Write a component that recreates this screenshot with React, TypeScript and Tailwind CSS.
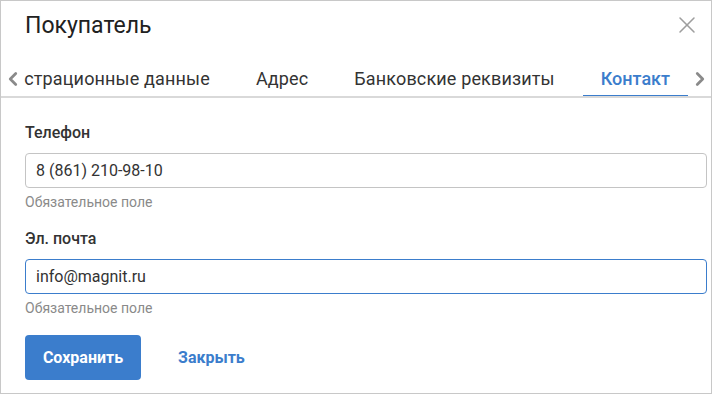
import { ChevronLeft, ChevronRight, X } from 'lucide-react'

const tabs = ['Регистрационные данные', 'Адрес', 'Банковские реквизиты', 'Контакт']

function Field({ label, value, focused }: { label: string; value: string; focused?: boolean }) {
  return (
    <div className="flex flex-col">
      <label className="text-[16px] font-medium leading-[18px] text-[#333]">{label}</label>
      <div
        className={
          focused
            ? 'mt-[11px] flex h-[35px] items-center rounded-[4px] border border-[#3b7dcc] px-[10px]'
            : 'mt-[11px] flex h-[35px] items-center rounded-[4px] border border-[#c4c4c4] px-[10px]'
        }
      >
        <span className="text-[16px] text-[#333]">{value}</span>
      </div>
      <span className="mt-[6px] text-[14px] leading-[16px] text-[#8a8a8a]">Обязательное поле</span>
    </div>
  )
}

export default function App() {
  return (
    <div className="h-[394px] w-[712px] bg-white font-['Roboto',sans-serif]">
      <div className="flex h-full flex-col border border-[#c8c8c8]">
        <div className="flex h-[47px] items-center justify-between pl-[24px] pr-[10px] pt-[4px]">
          <h1 className="text-[23px] font-normal text-[#212121]">Покупатель</h1>
          <X className="-mt-[4px] size-[28px] text-[#9e9e9e]" strokeWidth={1.3} aria-hidden="true" />
        </div>

        <div className="mt-[13px] flex h-[37px] items-stretch border-b-2 border-[#d9d9d9]">
          <div className="flex w-[23px] items-center justify-center">
            <ChevronLeft className="size-[22px] text-[#8a8a8a]" strokeWidth={3} aria-hidden="true" />
          </div>
          <div className="flex flex-1 justify-end overflow-hidden">
            <div className="flex shrink-0 gap-[10px]">
              {tabs.map((tab) => {
                const active = tab === 'Контакт'
                return (
                  <div
                    key={tab}
                    className={
                      active
                        ? 'relative flex shrink-0 items-center px-[18px] text-[18px] font-medium text-[#3b7dcc]'
                        : 'relative flex shrink-0 items-center px-[18px] text-[18px] font-normal tracking-[0.15px] text-[#333]'
                    }
                  >
                    {tab}
                    {active && <span className="absolute inset-x-0 bottom-[-2px] h-[3px] bg-[#3b7dcc]" />}
                  </div>
                )
              })}
            </div>
          </div>
          <div className="flex w-[23px] items-center justify-center">
            <ChevronRight className="size-[22px] text-[#8a8a8a]" strokeWidth={3} aria-hidden="true" />
          </div>
        </div>

        <div className="flex flex-col gap-[20px] pl-[24px] pr-[4px] pt-[26px]">
          <Field label="Телефон" value="8 (861) 210-98-10" />
          <Field label="Эл. почта" value="info@magnit.ru" focused />
        </div>

        <div className="mt-[19px] flex items-center gap-[37px] px-[24px]">
          <button className="h-[45px] w-[116px] rounded-[4px] bg-[#3b7dcc] text-[16px] font-bold text-white">
            Сохранить
          </button>
          <button className="text-[16px] font-bold text-[#3b7dcc]">Закрыть</button>
        </div>
      </div>
    </div>
  )
}
